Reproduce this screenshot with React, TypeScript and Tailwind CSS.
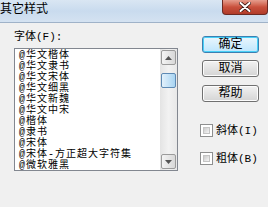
const fonts = {
  fontFamily: '"Liberation Mono", "Noto Sans CJK SC", monospace',
};

const fontList = [
  "@华文楷体",
  "@华文隶书",
  "@华文宋体",
  "@华文细黑",
  "@华文新魏",
  "@华文中宋",
  "@楷体",
  "@隶书",
  "@宋体",
  "@宋体-方正超大字符集",
  "@微软雅黑",
];

const DialogButton = ({
  label,
  isDefault,
}: {
  label: string;
  isDefault?: boolean;
}) => (
  <div
    className={
      isDefault
        ? "w-[57px] h-[17px] rounded-[3px] border border-[#3c7fb1] bg-gradient-to-b from-[#eaf6fd] to-[#bee6fd] shadow-[inset_0_0_0_1px_#48d0f7] flex items-center justify-center text-[12px] leading-[12px] text-black"
        : "w-[57px] h-[17px] rounded-[3px] border border-[#707070] bg-gradient-to-b from-[#f2f2f2] to-[#d4d4d4] shadow-[inset_0_0_0_1px_#fcfcfc] flex items-center justify-center text-[12px] leading-[12px] text-black"
    }
  >
    {label}
  </div>
);

const CheckRow = ({ label }: { label: string }) => (
  <div className="flex items-center h-[13px]">
    <div className="w-[13px] h-[13px] border border-[#8e8f8f] bg-white p-[2px]">
      <div className="w-full h-full border border-[#c4c4c4] bg-gradient-to-br from-[#cbcbcb] to-[#f6f6f6]" />
    </div>
    <span className="ml-[3px] text-[11px] leading-[12px] text-black">{label}</span>
  </div>
);

const ScrollArrow = ({ down }: { down?: boolean }) => (
  <div className="w-[15px] h-[15px] rounded-[2px] border border-[#9b9b9b] bg-gradient-to-r from-[#f4f4f4] to-[#d8d8d8] flex items-center justify-center">
    <svg width="7" height="4" viewBox="0 0 7 4">
      {down ? (
        <path d="M0 0 H7 L3.5 4 Z" fill="#555" />
      ) : (
        <path d="M0 4 H7 L3.5 0 Z" fill="#555" />
      )}
    </svg>
  </div>
);

const App = () => {
  return (
    <div
      className="w-[268px] h-[207px] bg-[#f0f0f0] overflow-hidden flex flex-col"
      style={fonts}
    >
      {/* title bar */}
      <div className="h-[23px] shrink-0 flex justify-between bg-gradient-to-b from-[#d9e6f3] via-[#c9dbee] to-[#d4e2f1] border-b border-[#9fb2c8]">
        <span className="text-[12px] leading-[12px] pt-[4px] text-black">
          其它样式
        </span>
        <div className="w-[46px] h-[15px] rounded-b-[4px] border border-t-0 border-[#6b2a23] bg-gradient-to-b from-[#e59d8d] via-[#c9503c] to-[#b03c2a] flex items-center justify-center">
          <svg width="12" height="10" viewBox="0 0 12 10">
            <path
              d="M1.5 1 L10.5 9 M10.5 1 L1.5 9"
              stroke="#3a1410"
              strokeWidth="3.6"
              strokeLinecap="round"
            />
            <path
              d="M1.5 1 L10.5 9 M10.5 1 L1.5 9"
              stroke="#ffffff"
              strokeWidth="2"
              strokeLinecap="round"
            />
          </svg>
        </div>
      </div>

      <div className="flex">
        {/* left column */}
        <div className="pl-[14px] pt-[8px] flex flex-col">
          <span className="text-[11px] leading-[13px] text-black">字体(F):</span>
          <div className="mt-[4px] w-[164px] h-[123px] border border-[#828790] bg-white flex overflow-hidden">
            <div className="flex-1 pl-[4px] pt-[1px] flex flex-col">
              {fontList.map((name, index) => (
                <span
                  key={index}
                  className="block shrink-0 text-[10px] tracking-[1px] leading-[11px] h-[11px] text-black whitespace-nowrap"
                >
                  {name}
                </span>
              ))}
            </div>
            <div className="w-[17px] bg-gradient-to-r from-[#e4e4e4] via-[#f2f2f2] to-[#e8e8e8] flex flex-col items-center py-[1px]">
              <ScrollArrow />
              <div className="mt-[8px] w-[15px] h-[15px] rounded-[2px] border border-[#5e8ab4] bg-gradient-to-r from-[#e3f1fb] to-[#a8d4f2]" />
              <div className="flex-1" />
              <ScrollArrow down />
            </div>
          </div>
        </div>

        {/* right column */}
        <div className="ml-[24px] pt-[13px] flex flex-col">
          <DialogButton label="确定" isDefault />
          <div className="mt-[7px]">
            <DialogButton label="取消" />
          </div>
          <div className="mt-[8px]">
            <DialogButton label="帮助" />
          </div>
          <div className="mt-[22px] -ml-[2px] flex flex-col gap-[15px]">
            <CheckRow label="斜体(I)" />
            <CheckRow label="粗体(B)" />
          </div>
        </div>
      </div>
    </div>
  );
};

export default App;
